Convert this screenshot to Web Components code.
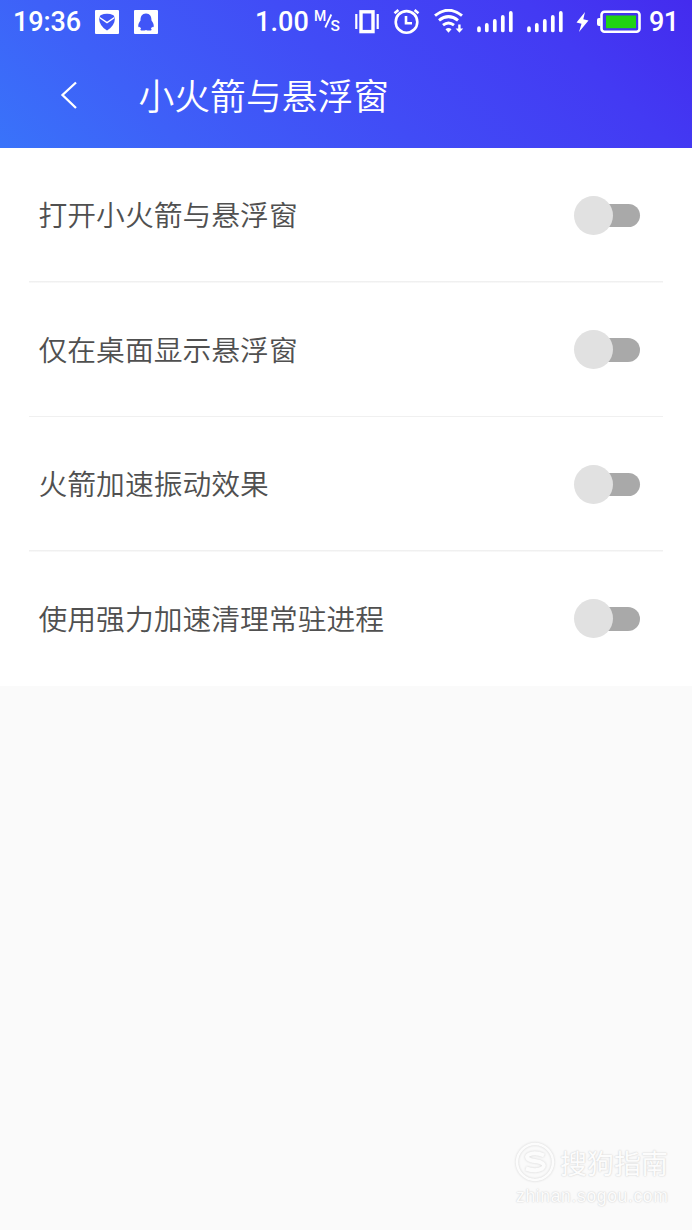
<!DOCTYPE html>
<html lang="zh-CN">
<head>
<meta charset="utf-8">
<title>小火箭与悬浮窗</title>
<style>
html,body{margin:0;height:100%}
body{background:#fafafa;font-family:"Noto Sans CJK SC","Noto Sans",sans-serif;overflow:hidden}
</style>
</head>
<body>
<settings-page></settings-page>
<script>
const define=(name,html)=>{
  const t=document.createElement('template');
  t.innerHTML=html;
  customElements.define(name,class extends HTMLElement{
    constructor(){super();this.attachShadow({mode:'open'}).append(t.content.cloneNode(true));}
  });
};

define('signal-bars',`<style>:host{display:block;width:36px;height:24px}svg{display:block}</style>
<svg width="36" height="24" fill="none" stroke="#fff" stroke-width="3.7" stroke-linecap="round"><path d="M2 18.2v2.3M9.8 14.9v5.6M17.8 10.9v9.6M25.8 6.9v13.6M33.8 2.9v17.6"/></svg>`);

define('status-bar',`<style>
:host{display:flex;height:43px;align-items:center;color:#fff;font:500 27px/43px Roboto,sans-serif;white-space:nowrap;box-sizing:border-box;padding-left:13px}
svg{display:block;flex:none}
span{flex:none;display:block;padding-top:1px}
.time{width:82px;letter-spacing:-.1px}
.mail{margin-right:15px}.qq{margin-right:97px}
.speed{width:58px;letter-spacing:.1px}
.unit{width:28px;height:43px;margin-right:14px}
.vib{margin-right:14px}.alarm{margin-right:14px}.wifi{margin-right:13px}
signal-bars{flex:none;margin-right:14px}
signal-bars+signal-bars{margin-right:13px}
.bolt{margin-right:8px}.bat{margin-right:8px}
.pct{letter-spacing:-.7px}
</style>
<span class="time">19:36</span>
<svg class="mail" width="24" height="24" viewBox="0 0 24 24"><path fill="#fff" d="M1 0h22q1 0 1 1v22q0 1-1 1H1q-1 0-1-1V1q0-1 1-1z"/><path fill="#4057f7" d="M5.5 5.2Q12 2.5 18.5 5.2L20 8Q19.7 16 12 20.5 4.3 16 4 8z"/><path d="M4.5 7.5 12 12.7 19.5 7.5" fill="none" stroke="#fff" stroke-width="1.5"/></svg>
<svg class="qq" width="24" height="24" viewBox="0 0 24 24"><path fill="#fff" d="M1 0h22q1 0 1 1v22q0 1-1 1H1q-1 0-1-1V1q0-1 1-1z"/><path fill="#4055f7" d="M12 3.5c-4 0-5.6 3-5.5 7C5 12.3 4 14.7 4.3 16.5c.2 1 .8.9 1.6.2q.4 1 1.2 1.8c-1.6 1.4-.3 2.2 1.7 2 1.3 0 2.6-.3 3.2-.6.6.3 1.9.6 3.2.6 2 .2 3.3-.6 1.7-2q.8-.8 1.2-1.8c.8.7 1.4.8 1.6-.2.3-1.8-.7-4.2-2.2-6 .1-4-1.5-7-5.5-7z"/></svg>
<span class="speed">1.00</span>
<svg class="unit" viewBox="0 0 28 43" fill="#fff" font-family="Roboto,sans-serif" font-weight="500"><text x="1" y="21" font-size="14">M</text><path d="M12.3 27.5 18.3 14.5" stroke="#fff" stroke-width="1.8"/><text x="17.5" y="31.3" font-size="15.5">S</text></svg>
<svg class="vib" width="24" height="24" viewBox="0 0 24 24" fill="none" stroke="#fff"><rect x="6" y="1.8" width="12" height="19.8" stroke-width="3.4"/><path d="M1.3 4v15M22.7 4v15" stroke-width="2.2"/></svg>
<svg class="alarm" width="27" height="26" viewBox="0 0 27 26" fill="none" stroke="#fff" stroke-width="2.6"><circle cx="13.5" cy="12.9" r="10.8"/><path d="M13 7v7.2h6"/><path d="M1.5 4.2 5.4 1M21.6 1l3.9 3.2"/></svg>
<svg class="wifi" width="30" height="26" viewBox="0 0 30 26" fill="none" stroke="#fff" stroke-width="3"><path d="M1 6.7Q14.5-4.2 28 6.7M5 11.4Q14.5 3.8 24 11.4M9 16.1Q14.5 11.8 20 16.1"/><path d="M11.5 20.3Q14.5 17.8 17.5 20.3L14.5 23.8z" fill="#fff" stroke="none"/><path d="M25.4 15.5v5.5" stroke-width="2.4"/><path d="M21.6 19.5h7.6l-3.8 4.3z" fill="#fff" stroke="none"/></svg>
<signal-bars></signal-bars><signal-bars></signal-bars>
<svg class="bolt" width="13" height="20" viewBox="0 0 13 20"><path fill="#fff" d="M9 0 .5 10.5l5 1.2L3 20l9.5-11.5-5.2-1.2z"/></svg>
<svg class="bat" width="44" height="24" viewBox="0 0 44 24"><rect x="4.5" y="1.8" width="38" height="20" rx="3" fill="none" stroke="#fff" stroke-width="2.6"/><path fill="#fff" d="M3.5 8H2Q0 8 0 10v4q0 2 2 2h1.5z"/><path fill="#20d313" d="M9 5.5h30v12.7H9z"/></svg>
<span class="pct">91</span>`);

define('title-bar',`<style>
:host{display:flex;height:105px;align-items:center;color:#fff;padding-left:60px}
svg{display:block;flex:none;margin-right:61.5px;margin-top:-1px}
h1{margin:-3px 0 0;font-size:35.8px;line-height:52px;font-weight:350}
</style>
<svg width="17" height="28" viewBox="0 0 17 28"><path d="M16 1.5 2.5 14 16 27" fill="none" stroke="#fff" stroke-width="2.3"/></svg><h1><slot></slot></h1>`);

define('toggle-switch',`<style>
:host{display:flex;align-items:center;width:66px;height:39px}
i{display:block;flex:none;width:39px;height:39px;border-radius:50%;background:#e1e1e1;z-index:1}
b{display:block;flex:none;width:37.5px;height:23.5px;margin-left:-11px;border-radius:0 12px 12px 0;background:#a9a9a9}
</style><i></i><b></b>`);

define('setting-row',`<style>
:host{display:block;height:134.5px;padding:0 29px;box-sizing:border-box}
div{display:flex;justify-content:space-between;align-items:center;height:134.5px;padding:0 23px 0 9.5px;box-sizing:border-box;background:linear-gradient(#f0f0f0,#f0f0f0) 0 133px/100% 1.5px no-repeat;color:#505050;font-size:28.8px;line-height:42px;font-weight:350}
span{margin-top:-2px}
:host([last]) div{background:none}
</style><div><span><slot></slot></span><toggle-switch></toggle-switch></div>`);

define('water-mark',`<style>
:host{display:block;color:#fcfcfc;width:156px;text-shadow:0 0 2px #d0d0d0,0 0 1px #e0e0e0}
.top{display:flex;align-items:center;gap:5px;height:40px;font-size:27px;line-height:40px;font-weight:400}
.top span{margin-top:-1px}
.url{font:17.5px/24px "Liberation Sans",sans-serif;margin:1px 0 0 1px;white-space:nowrap;letter-spacing:.65px}
svg{display:block;filter:drop-shadow(0 0 1px #d2d2d2);flex:none;margin-top:-2px}
</style><div class="top"><svg width="40" height="40" viewBox="0 0 40 40" fill="none" stroke="#fcfcfc"><circle cx="20" cy="20" r="18" stroke-width="2.5"/><path d="M29 13.5Q20 9.5 14 12.5c-5 3 0 5.8 6 6.5s12 3.5 7 7.5q-6 3.5-16 0" stroke-width="4"/></svg><span>搜狗指南</span></div><div class="url">zhinan.sogou.com</div>`);

define('settings-page',`<style>
:host{display:flex;flex-direction:column;width:692px;height:1230px;background:#fafafa}
header{height:148px;flex:none;background:linear-gradient(45deg,#3973fa 0%,#3e60f8 22%,#414cf6 50%,#433af3 80%,#442bee 100%)}
main{background:#fff;height:538px;flex:none}
footer{margin-top:auto;display:flex;justify-content:flex-end;padding:0 21px 22px 0}
</style>
<header><status-bar></status-bar><title-bar>小火箭与悬浮窗</title-bar></header>
<main><setting-row>打开小火箭与悬浮窗</setting-row><setting-row>仅在桌面显示悬浮窗</setting-row><setting-row>火箭加速振动效果</setting-row><setting-row last>使用强力加速清理常驻进程</setting-row></main>
<footer><water-mark></water-mark></footer>`);
</script>
</body>
</html>
